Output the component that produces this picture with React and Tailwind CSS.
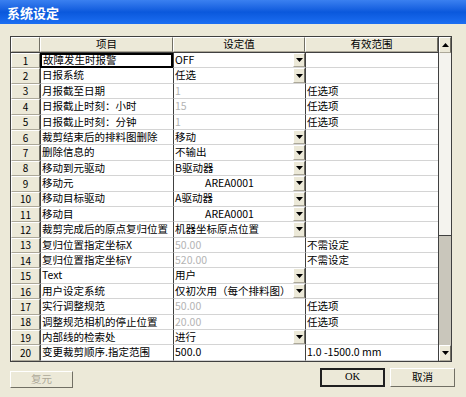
import React from 'react'

const rows = [
  { item: '故障发生时报警', value: 'OFF', drop: true },
  { item: '日报系统', value: '任选', drop: true },
  { item: '月报截至日期', value: '1', dim: true, range: '任选项' },
  { item: '日报截止时刻：小时', value: '15', dim: true, range: '任选项' },
  { item: '日报截止时刻：分钟', value: '1', dim: true, range: '任选项' },
  { item: '裁剪结束后的排料图删除', value: '移动', drop: true },
  { item: '删除信息的', value: '不输出', drop: true },
  { item: '移动到元驱动', value: 'B驱动器', drop: true },
  { item: '移动元', value: 'AREA0001', drop: true, center: true },
  { item: '移动目标驱动', value: 'A驱动器', drop: true },
  { item: '移动目', value: 'AREA0001', drop: true, center: true },
  { item: '裁剪完成后的原点复归位置', value: '机器坐标原点位置', drop: true },
  { item: '复归位置指定坐标X', value: '50.00', dim: true, range: '不需设定' },
  { item: '复归位置指定坐标Y', value: '520.00', dim: true, range: '不需设定' },
  { item: 'Text', value: '用户', drop: true },
  { item: '用户设定系统', value: '仅初次用（每个排料图）', drop: true },
  { item: '实行调整规范', value: '50.00', dim: true, range: '任选项' },
  { item: '调整规范相机的停止位置', value: '20.00', dim: true, range: '任选项' },
  { item: '内部线的检索处', value: '进行', drop: true },
  { item: '变更裁剪顺序.指定范围', value: '500.0', range: '1.0 -1500.0 mm' },
]

const font = { fontFamily: '"Noto Sans CJK SC", "DejaVu Sans", sans-serif' }

function Arrow({ up }) {
  return (
    <svg width="7" height="4" viewBox="0 0 7 4">
      <path d={up ? 'M0 4 L3.5 0 L7 4 Z' : 'M0 0 L7 0 L3.5 4 Z'} fill="#000" />
    </svg>
  )
}

function Bevel({ className, children }) {
  return (
    <div
      className={`flex items-center justify-center border-t border-l border-t-white border-l-white border-r border-b border-r-[#716f64] border-b-[#aca899] bg-[#ece9d8] ${className}`}
    >
      {children}
    </div>
  )
}

function Row({ r, i }) {
  return (
    <div className="flex h-[15.4px]">
      <Bevel className="w-[29px] shrink-0 text-[10px] text-black">{i + 1}</Bevel>
      <div
        className={`flex w-[133px] shrink-0 items-center overflow-hidden whitespace-nowrap bg-white pl-[1px] ${
          i === 0 ? 'border-2 border-black' : 'border-l border-l-[#404040] border-b border-b-[#d4d4d4]'
        }`}
      >
        {r.item}
      </div>
      <div className="flex w-[132px] shrink-0 items-center overflow-hidden whitespace-nowrap border-l border-l-[#404040] border-b border-b-[#d4d4d4] bg-white">
        <div className={`flex-1 pl-[1px] ${r.dim ? 'text-[#b4b4b4]' : ''} ${r.center ? 'pl-[31px]' : ''}`}>
          {r.value}
        </div>
        {r.drop && (
          <Bevel className="h-full w-[12px] shrink-0">
            <Arrow />
          </Bevel>
        )}
      </div>
      <div className="flex w-[133px] shrink-0 items-center overflow-hidden whitespace-nowrap border-l border-l-[#404040] border-b border-b-[#d4d4d4] bg-white pl-[1px]">
        {r.range}
      </div>
    </div>
  )
}

export default function App() {
  return (
    <div className="h-[397px] w-[466px] overflow-hidden bg-[#ece9d8] text-[10.5px] leading-none text-black" style={font}>
      <div className="flex h-[24px] items-center bg-gradient-to-b from-[#3a80f0] via-[#0a58dc] to-[#1c6ef2] pl-[7px] text-[13px] font-bold text-white">
        系统设定
      </div>
      <div className="ml-[10px] mt-[12px] flex w-[442px] border border-[#404040]">
        <div className="w-[427px]">
          <div className="flex h-[16px] border-b border-b-[#404040]">
            <Bevel className="w-[29px] shrink-0" />
            <Bevel className="w-[133px] shrink-0">项目</Bevel>
            <Bevel className="w-[132px] shrink-0">设定值</Bevel>
            <Bevel className="w-[133px] shrink-0">有效范围</Bevel>
          </div>
          {rows.map((r, i) => (
            <Row key={i} r={r} i={i} />
          ))}
        </div>
        <div className="flex w-[13px] flex-col border-l border-l-[#404040]">
          <Bevel className="h-[16px] shrink-0">
            <Arrow up />
          </Bevel>
          <div className="h-[182px] bg-[#f4f3ee]" />
          <div className="flex-1 border-t border-t-[#404040] bg-[#c9c6bb]" />
          <Bevel className="h-[16px] shrink-0">
            <Arrow />
          </Bevel>
        </div>
      </div>
      <div className="mt-[9px] flex px-[10px]">
        <div className="flex h-[17px] w-[63px] items-center justify-center border border-t-white border-l-white border-r-[#716f64] border-b-[#716f64] text-[#aca899]">
          复元
        </div>
        <div className="flex-1" />
        <div className="-mt-[3px] flex h-[19px] w-[65px] items-center justify-center border-2 border-[#202020] bg-[#ece9d8]">
          <span style={{ fontFamily: '"Liberation Serif", serif' }}>OK</span>
        </div>
        <div className="-mt-[3px] ml-[5px] mr-[1px] flex h-[19px] w-[65px] items-center justify-center border border-t-white border-l-white border-r-[#716f64] border-b-[#716f64]">
          取消
        </div>
      </div>
    </div>
  )
}
